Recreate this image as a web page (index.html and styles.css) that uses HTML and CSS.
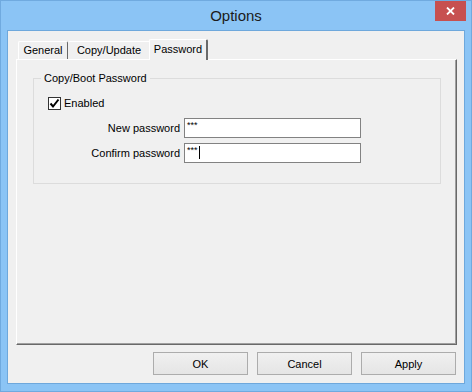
FILE: index.html
```html
<!DOCTYPE html>
<html>
<head>
    <title>Options</title>
    <link rel="stylesheet" href="styles.css">
</head>
<body>
    <div class="window">
        <div class="titlebar">
            <span></span>
            <span class="title">Options</span>
            <span class="close">
                <svg width="9" height="8" viewBox="0 0 9 8">
                    <path d="M1 0.5 L8 7.5 M8 0.5 L1 7.5" stroke="#fff" stroke-width="1.8" fill="none"/>
                </svg>
            </span>
        </div>

        <div class="client">
            <div class="tabs">
                <span class="tab tab-general">General</span>
                <span class="tab tab-copy">Copy/Update</span>
                <span class="tab tab-pass active">Password</span>
            </div>

            <div class="panel">
                <fieldset class="group">
                    <legend>Copy/Boot Password</legend>
                    <label class="check">
                        <span class="box">
                            <svg width="11" height="11" viewBox="0 0 11 11">
                                <path d="M1.5 5.5 L4 8.5 L9.5 1.5" stroke="#000" stroke-width="2" fill="none"/>
                            </svg>
                        </span>
                        Enabled
                    </label>
                    <div class="fields">
                        <span class="lbl">New password</span>
                        <span class="field">***</span>
                        <span class="lbl">Confirm password</span>
                        <span class="field">***<i class="caret"></i></span>
                    </div>
                </fieldset>
            </div>

            <div class="buttons">
                <button class="btn">OK</button>
                <button class="btn">Cancel</button>
                <button class="btn">Apply</button>
            </div>
        </div>
    </div>
</body>
</html>
```

FILE: styles.css
```css
body { margin: 0; font-family: "Liberation Sans", Arial, sans-serif; font-size: 11px; color: #000; }

.window {
    width: 472px; height: 392px; box-sizing: border-box;
    display: flex; flex-direction: column;
    background: #8bc4f5; border: 1px solid #70aadf;
    padding: 0 6px 7px;
}

.titlebar {
    height: 29px; flex: none;
    display: grid; grid-template-columns: 1fr auto 1fr;
}
.title { font-size: 15px; line-height: 29px; color: #1b1b1b; }
.close {
    justify-self: end; align-self: start;
    width: 31px; height: 20px; margin-right: -1px;
    background: #c75050;
    display: flex; align-items: center; justify-content: center;
}

.client {
    flex: 1; display: flex; flex-direction: column;
    background: #f0f0f0; border: 1px solid #6ea8dc;
    padding: 8px 7px 8px 8px;
}

.tabs { display: flex; align-items: flex-end; height: 20px; padding-left: 2px; }
.tab {
    height: 18px; box-sizing: border-box; line-height: 17px; text-align: center;
    border-top: 1px solid #fff; border-left: 1px solid #fff; border-right: 1px solid #a0a0a0;
    border-radius: 2px 2px 0 0;
}
.tab-general { width: 50px; border-right-color: #696969; }
.tab-copy { width: 83px; border-left: none; }
.tab-pass { width: 59px; margin-left: -2px; }
.tab.active {
    height: 21px; margin-bottom: -1px; line-height: 19px;
    position: relative; z-index: 1;
    background: #f0f0f0; border-right: 2px solid #696969;
}

.panel {
    height: 286px; box-sizing: border-box; flex: none;
    border-top: 1px solid #fff; border-left: 1px solid #fff;
    border-right: 1px solid #696969; border-bottom: 1px solid #696969;
    box-shadow: inset -1px -1px 0 #a0a0a0;
}

.group {
    margin: 12px 0 0 16px; padding: 0;
    width: 408px; height: 112px; box-sizing: border-box;
    border: 1px solid #dcdcdc;
}
.group legend { margin-left: 7px; padding: 0 3px; line-height: 13px; }

.check { display: flex; align-items: center; gap: 3px; margin: 12px 0 0 14px; line-height: 13px; }
.box {
    width: 13px; height: 13px; box-sizing: border-box;
    border: 1px solid #333; background: #fff;
    display: flex; align-items: center; justify-content: center;
}

.fields {
    display: grid; grid-template-columns: 146px 177px;
    column-gap: 4px; row-gap: 5px; margin-top: 8px;
}
.lbl { text-align: right; line-height: 20px; }
.field {
    height: 20px; box-sizing: border-box;
    border: 1px solid #828282; background: #fff;
    padding-left: 2px; font-size: 9px; line-height: 12px;
    display: flex; align-items: flex-start;
}
.caret { width: 1px; height: 13px; background: #000; margin: 2px 0 0 1px; }

.buttons { display: flex; justify-content: flex-end; gap: 9px; margin-top: 7px; padding-right: 1px; }
.btn {
    width: 95px; height: 23px;
    font-family: inherit; font-size: 11px; color: #000;
    border: 1px solid #acacac; border-radius: 0;
    background: linear-gradient(#f0f0f0, #e5e5e5);
    padding: 0;
}
```
